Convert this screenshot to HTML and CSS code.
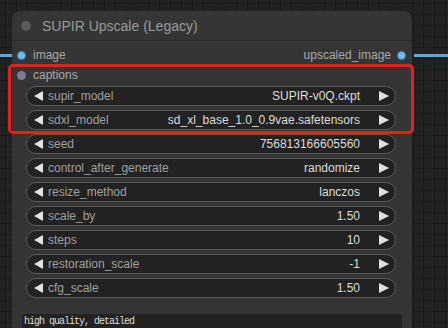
FILE: index.html
```html
<!DOCTYPE html>
<html>
<head>
<meta charset="utf-8">
<link rel="stylesheet" href="styles.css">
</head>
<body>
<div class="canvas">
  <div class="link link-in"></div>
  <div class="link link-out"></div>
  <div class="node">
    <div class="title"><span class="title-dot"></span><span class="title-text">SUPIR Upscale (Legacy)</span></div>
    <div class="body">
      <div class="slot-row">
        <div class="slot slot-in"><span class="dot dot-blue"></span><span class="slot-label">image</span></div>
        <div class="slot slot-out"><span class="slot-label">upscaled_image</span><span class="dot dot-blue"></span></div>
      </div>
      <div class="slot-row">
        <div class="slot slot-in"><span class="dot dot-grey"></span><span class="slot-label">captions</span></div>
      </div>
      <div class="widgets">
        <div class="widget"><span class="arrow arrow-l"></span><span class="w-label">supir_model</span><span class="w-value">SUPIR-v0Q.ckpt</span><span class="arrow arrow-r"></span></div>
        <div class="widget"><span class="arrow arrow-l"></span><span class="w-label">sdxl_model</span><span class="w-value">sd_xl_base_1.0_0.9vae.safetensors</span><span class="arrow arrow-r"></span></div>
        <div class="widget"><span class="arrow arrow-l"></span><span class="w-label">seed</span><span class="w-value">756813166605560</span><span class="arrow arrow-r"></span></div>
        <div class="widget"><span class="arrow arrow-l"></span><span class="w-label">control_after_generate</span><span class="w-value">randomize</span><span class="arrow arrow-r"></span></div>
        <div class="widget"><span class="arrow arrow-l"></span><span class="w-label">resize_method</span><span class="w-value">lanczos</span><span class="arrow arrow-r"></span></div>
        <div class="widget"><span class="arrow arrow-l"></span><span class="w-label">scale_by</span><span class="w-value">1.50</span><span class="arrow arrow-r"></span></div>
        <div class="widget"><span class="arrow arrow-l"></span><span class="w-label">steps</span><span class="w-value">10</span><span class="arrow arrow-r"></span></div>
        <div class="widget"><span class="arrow arrow-l"></span><span class="w-label">restoration_scale</span><span class="w-value">-1</span><span class="arrow arrow-r"></span></div>
        <div class="widget"><span class="arrow arrow-l"></span><span class="w-label">cfg_scale</span><span class="w-value">1.50</span><span class="arrow arrow-r"></span></div>
      </div>
      <div class="textarea">high quality, detailed</div>
    </div>
  </div>
  <div class="highlight"></div>
</div>
</body>
</html>
```
FILE: styles.css
```css
html, body {
  margin: 0;
  padding: 0;
}
body {
  width: 448px;
  height: 328px;
  overflow: hidden;
  background-color: #222222;
  background-image:
    linear-gradient(to right, #1b1b1b 1px, transparent 1px),
    linear-gradient(to bottom, #1b1b1b 1px, transparent 1px);
  background-size: 11px 11px;
  background-position: 5px 3px;
  font-family: "Liberation Sans", Arial, sans-serif;
}
.canvas {
  position: relative;
  width: 448px;
  height: 328px;
  padding-top: 11px;
  box-sizing: border-box;
}
.link {
  position: absolute;
  height: 3px;
  background: #5aa8e6;
  top: 54px;
}
.link-in { left: 0; width: 20px; }
.link-out { left: 404px; width: 44px; }
.node {
  position: relative;
  margin-left: 12px;
  width: 400px;
  height: 330px;
  background: #353535;
  border-radius: 8px 8px 0 0;
  box-shadow: 2px 0 0 #1c1c1c;
}
.title {
  height: 29px;
  border-bottom: 1px solid #2c2c2c;
  display: flex;
  align-items: center;
  padding-left: 9px;
  gap: 11px;
}
.title-dot {
  width: 10px;
  height: 10px;
  border-radius: 50%;
  background: #5a5a5a;
}
.title-text {
  color: #999999;
  font-size: 14px;
}
.body {
  padding-top: 4px;
}
.slot-row {
  height: 20px;
  display: flex;
  justify-content: space-between;
  align-items: center;
}
.slot {
  display: flex;
  align-items: center;
  font-size: 12px;
}
.slot-in { padding-left: 5px; gap: 7px; }
.slot-out { padding-right: 6px; gap: 6px; }
.slot-label { color: #a8a8a8; }
.dot {
  width: 9px;
  height: 9px;
  border-radius: 50%;
  box-sizing: border-box;
}
.dot-blue { background: #6cbcf5; border: 1px solid #3d7fb8; }
.dot-grey { background: #7c7c8c; }
.widgets {
  margin: 1px 16px 0 14px;
  display: flex;
  flex-direction: column;
  gap: 4px;
}
.widget {
  height: 20px;
  box-sizing: border-box;
  border: 1px solid #5a5a5a;
  border-radius: 10px;
  background: #222222;
  display: flex;
  align-items: center;
  padding: 0 6px 0 7px;
  font-size: 12px;
}
.arrow {
  width: 0;
  height: 0;
  border-top: 5px solid transparent;
  border-bottom: 5px solid transparent;
}
.arrow-l { border-right: 9px solid #e0e0e0; }
.arrow-r { border-left: 10px solid #e0e0e0; }
.w-label {
  color: #a0a0a0;
  margin-left: 5px;
  flex: 1;
  white-space: nowrap;
}
.w-value {
  color: #dddddd;
  margin-right: 19px;
  white-space: nowrap;
}
.textarea {
  margin: 16px 10px 0 10px;
  height: 30px;
  background: #222222;
  color: #dddddd;
  font-family: "Liberation Mono", monospace;
  font-size: 10px;
  line-height: 10px;
  letter-spacing: -1px;
  padding: 3px 0 0 2px;
  box-sizing: border-box;
}
.highlight {
  position: absolute;
  left: 8px;
  top: 64px;
  width: 406px;
  height: 70px;
  box-sizing: border-box;
  border: 3px solid #e8201c;
  border-radius: 5px;
}
```
